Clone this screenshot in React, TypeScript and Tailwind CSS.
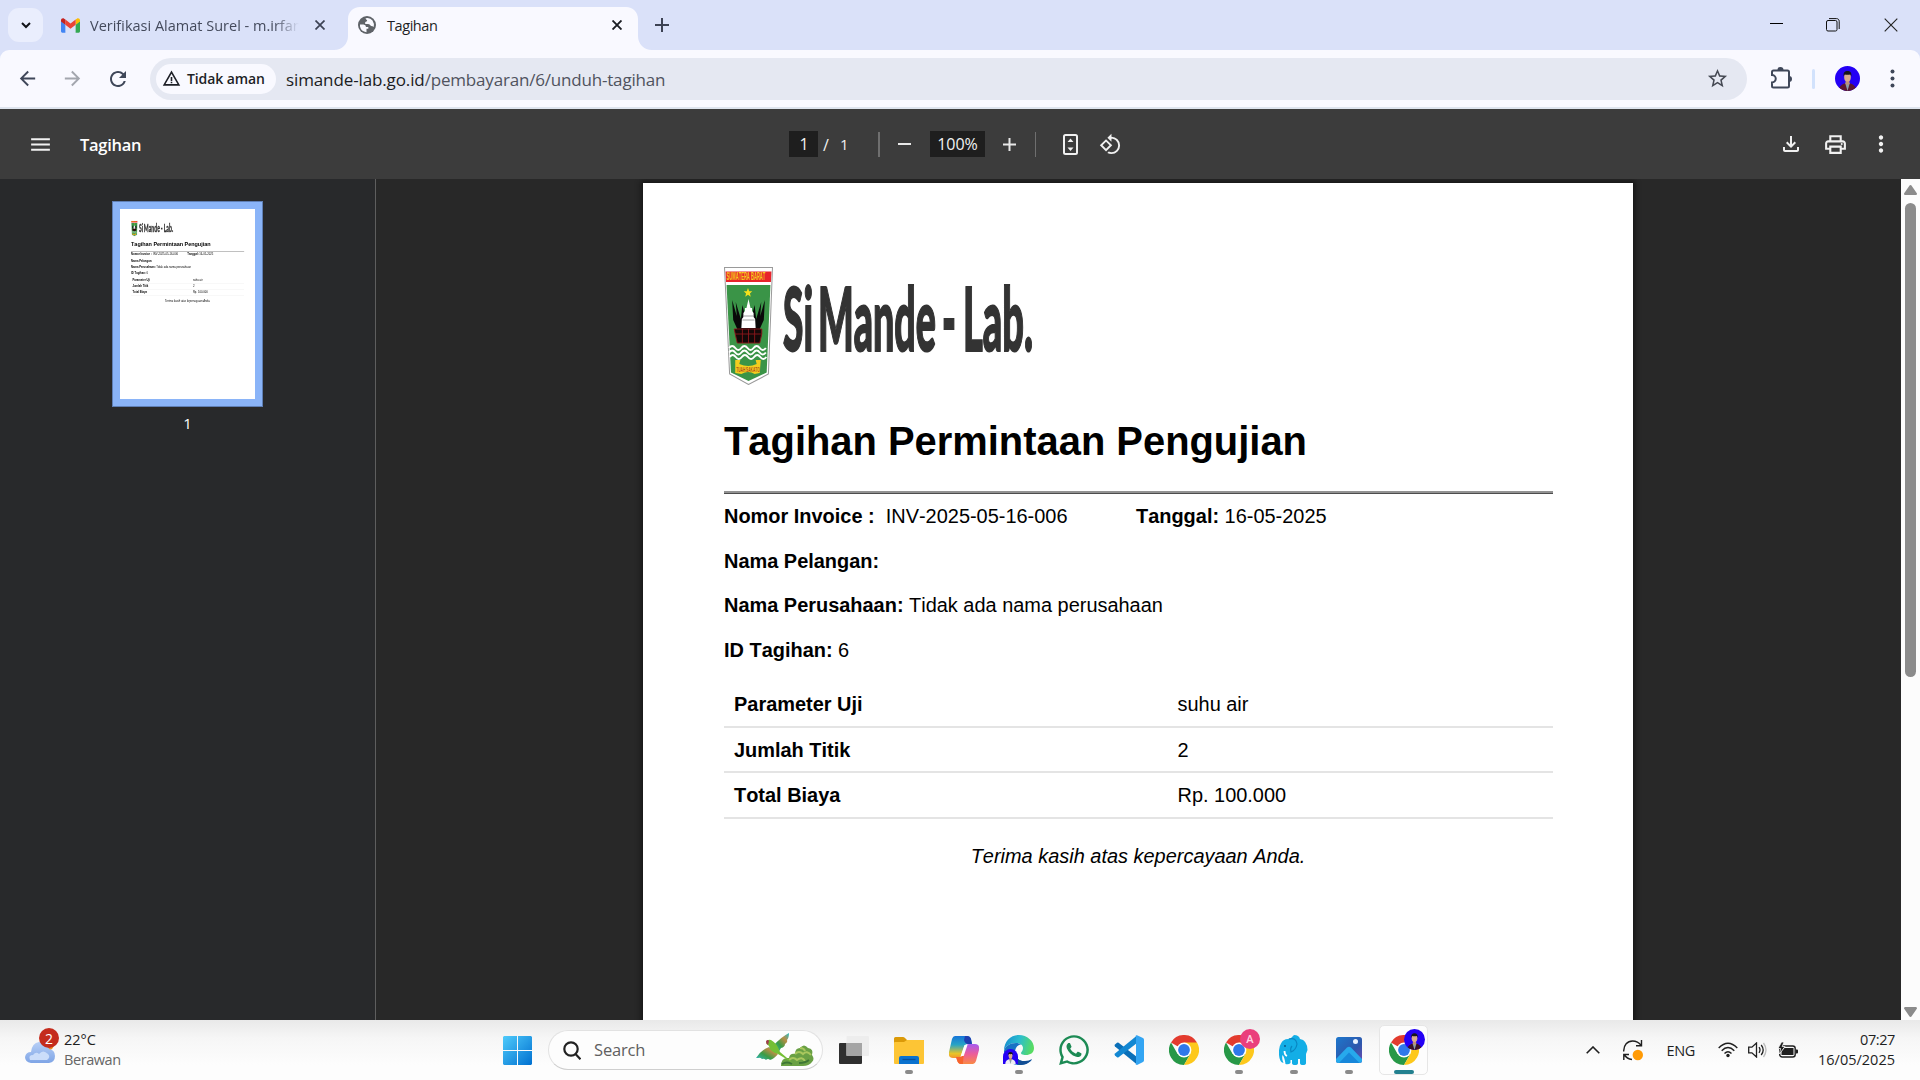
import React, { useLayoutEffect, useRef, useState } from "react";
import {
  MdStarOutline,
  MdMoreVert,
  MdOutlineFileDownload,
  MdOutlinePrint,
  MdRotate90DegreesCcw,
  MdArrowBack,
  MdArrowForward,
  MdRefresh,
  MdMenu,
  MdWarningAmber,
} from "react-icons/md";
import { FaWhatsapp } from "react-icons/fa";

/** Single-line label whose letter spacing is tuned so that it spans `w` pixels. */
function Label({ w, className = "", children }: { w: number; className?: string; children: string }) {
  const ref = useRef<HTMLSpanElement>(null);
  const [spacing, setSpacing] = useState(0);
  useLayoutEffect(() => {
    const natural = ref.current!.offsetWidth;
    setSpacing((w - natural) / children.length);
  }, [w, children]);
  return (
    <span ref={ref} className={`inline-block shrink-0 whitespace-pre ${className}`} style={{ letterSpacing: spacing }}>
      {children}
    </span>
  );
}

function GmailIcon() {
  return (
    <svg width="19" height="15" viewBox="0 0 24 18">
      <path d="M0 3v13.4C0 17.3.7 18 1.600 18H5.500V8L0 3z" fill="#4285f4" />
      <path d="M18.500 18h3.900c.9 0 1.600-.7 1.600-1.600V3l-5.500 5z" fill="#34a853" />
      <path d="M18.500 1.500V8L24 4V2.500c0-2.100-2.400-3.300-4-2z" fill="#fbbc04" />
      <path d="M5.500 8V1.500L12 6.500l6.500-5V8L12 13z" fill="#ea4335" />
      <path d="M0 2.500V4l5.500 4V1.500L4 .5C2.400-.8 0 .4 0 2.500z" fill="#c5221f" />
    </svg>
  );
}

function Globe() {
  return (
    <svg className="relative -mt-[7px]" width="18" height="18" viewBox="0 0 18 18">
      <circle cx="9" cy="9" r="9" fill="#5f6368" />
      <path d="M2 8.500h3.500q2.500.3 2.500 2.500h2.300v1.800H8.500v3.400Q3 15.500 2 10.500z" fill="#f9f9ff" />
      <path d="M7.500 2.200Q12 1 14.500 4.500q2 3 1.200 6.500-1-1-2.700-1-1.500-2.500-3.500-2H7.200V6q1.800-.2 2-1.800Q8 3.800 7.500 2.200z" fill="#f9f9ff" />
    </svg>
  );
}

function Cross({ size, stroke, width }: { size: number; stroke: string; width: number }) {
  return (
    <svg width={size} height={size} viewBox="0 0 10 10" fill="none" stroke={stroke} strokeWidth={width}>
      <path d="M.5.5l9 9M9.500.5l-9 9" />
    </svg>
  );
}

function Portrait({ size, suit = "#5c1830", square = false }: { size: number; suit?: string; square?: boolean }) {
  return (
    <svg width={size} height={size} viewBox="0 0 26 26" className={square ? "rounded-t-full" : "rounded-full"}>
      <rect width="26" height="26" fill="#2400f5" />
      <path d="M4 26c0-5 3-7.500 9-8.500 6 1 9 3.500 9 8.500z" fill={suit} />
      <path d="M10.500 17.500L13 26l2.500-8.500z" fill="#8aa0a8" />
      <path d="M11 14h4v4.500l-2 1.500-2-1.500z" fill="#c09178" />
      <ellipse cx="13" cy="11.500" rx="3.500" ry="4.700" fill="#d9aa8e" />
      <path d="M9 11c-.6-4 1.200-5.800 4-5.800s4.600 1.800 4 5.800l-1-2.200c-2 .3-4 .3-6 0z" fill="#17151a" />
    </svg>
  );
}

function TitleBar() {
  return (
    <div className="flex h-[50px] bg-[#dae1f9] text-[15px]">
      <div className="ml-2 mt-2 flex h-[34px] w-[35px] items-center justify-center rounded-[11px] bg-[#eaeefd]">
        <svg width="10" height="7" viewBox="0 0 10 7" fill="none" stroke="#111318" strokeWidth="2">
          <path d="M1 1l4 4 4-4" />
        </svg>
      </div>
      <div className="ml-[18px] flex h-[50px] w-[273px] items-center">
        <GmailIcon />
        <div className="ml-[10px] w-[209px] overflow-hidden text-[#444a5c] [mask-image:linear-gradient(90deg,#000_88%,transparent)]">
          <Label w={212} className="text-[14.5px]">Verifikasi Alamat Surel - m.irfan</Label>
        </div>
        <div className="ml-4">
          <Cross size={10} stroke="#3c4254" width={1.7} />
        </div>
      </div>
      <div className="relative mt-[7px] flex h-[43px] w-[304px] items-center pl-[24px]">
        <svg className="absolute left-0 top-0" width="320" height="43" viewBox="0 0 320 43">
          <path d="M0 43c8 0 14-6 14-14V12C14 5 19 0 26 0H292c7 0 12 5 12 12V29c0 8 6 14 14 14z" fill="#f9f9ff" />
        </svg>
        <Globe />
        <div className="relative -mt-[7px] ml-[11px] w-[225px] text-[#1f1f25]">
          <Label w={50} className="text-[14.5px]">Tagihan</Label>
        </div>
        <div className="relative -mt-[7px]">
          <Cross size={10} stroke="#1b1d24" width={1.9} />
        </div>
      </div>
      <svg className="ml-[17px] mt-[18px]" width="14" height="14" viewBox="0 0 14 14" stroke="#3c4254" strokeWidth="2">
        <path d="M7 0v14M0 7h14" />
      </svg>
      <div className="ml-auto flex items-start pr-[22px] pt-[18px]">
        <svg className="mt-[5px]" width="13" height="1">
          <rect width="13" height="1" fill="#000" />
        </svg>
        <svg className="ml-[43px]" width="14" height="14" viewBox="0 0 14 14" fill="none" stroke="#111" strokeWidth="1">
          <rect x=".5" y="2.500" width="10.500" height="10.500" rx="1.500" />
          <path d="M3 .6h7.500c1.500 0 2.700 1 2.700 2.700V11" />
        </svg>
        <div className="ml-[44px]">
          <Cross size={14} stroke="#222" width={0.8} />
        </div>
      </div>
    </div>
  );
}

function AddressBar() {
  return (
    <div className="bg-[#dae1f9]">
      <div className="flex h-[59px] items-center rounded-t-[9px] border-b-2 border-[#dee4ee] bg-[#f9f9ff] pl-4 text-[#3f4759]">
        <MdArrowBack className="text-[23px]" />
        <MdArrowForward className="ml-[22px] text-[23px] text-[#a3a6ae]" />
        <MdRefresh className="ml-[22px] text-[24px]" />
        <div className="ml-[20px] flex h-[42px] w-[1597px] items-center rounded-full bg-[#e5e8f2] pl-[6px]">
          <div className="flex h-[30px] w-[120px] items-center rounded-full bg-[#f9f9ff] pl-[6px] text-[#1d1f26]">
            <MdWarningAmber className="text-[19px]" />
            <Label w={78} className="ml-[6px] text-[14px] font-semibold">Tidak aman</Label>
          </div>
          <div className="ml-[10px] flex pt-[3px] text-[17px] leading-6">
            <Label w={139} className="text-[#1b1c22]">simande-lab.go.id</Label>
            <Label w={241} className="text-[#50535e]">/pembayaran/6/unduh-tagihan</Label>
          </div>
          <MdStarOutline className="ml-auto mr-[18px] text-[23px] text-[#454953]" />
        </div>
        <svg className="ml-[23px]" width="23" height="23" viewBox="0 0 23 23">
          <path
            d="M3.500 3.500h14q1.500 0 1.500 1.500v14q0 1.500-1.500 1.500h-14Q2 20.500 2 19v-3.500a3.700 3.700 0 0 0 0-7.500V5q0-1.500 1.500-1.500z"
            fill="none"
            stroke="#3f4759"
            strokeWidth="2"
          />
          <path d="M7.500 3a3 3 0 0 1 6 0zM19 9a3 3 0 0 1 0 6z" fill="#3f4759" />
        </svg>
        <div className="ml-[19px] h-5 w-[3px] rounded bg-[#d2e2fc]" />
        <div className="ml-5">
          <Portrait size={25} />
        </div>
        <svg className="ml-[30px]" width="5" height="19" viewBox="0 0 5 19" fill="#3f4759">
          <circle cx="2.500" cy="2.500" r="2" />
          <circle cx="2.500" cy="9.500" r="2" />
          <circle cx="2.500" cy="16.500" r="2" />
        </svg>
      </div>
    </div>
  );
}

function PdfToolbar() {
  return (
    <div className="flex h-[70px] items-center bg-[#3c3c3c] text-[#f1f1f1]">
      <MdMenu className="ml-[28px] text-[25px]" />
      <div className="ml-[27px] w-[709px] pt-[2px]">
        <Label w={61} className="text-[16.5px] font-semibold text-white">Tagihan</Label>
      </div>
      <div className="flex h-[26px] w-[29px] items-center justify-center bg-[#1e1e1e] pl-px text-[16px]">1</div>
      <div className="flex w-[60px] items-center pl-[5px] pt-px text-[16px]">
        <span>/</span>
        <span className="ml-[11px] text-[15px]">1</span>
      </div>
      <div className="h-[25px] w-[2px] bg-[#6f6f6f]" />
      <div className="ml-[18px] h-[2px] w-[13px] bg-[#e8e8e8]" />
      <div className="ml-[19px] flex h-[26px] w-[55px] items-center justify-center bg-[#1e1e1e] text-[16px]">
        <Label w={41}>100%</Label>
      </div>
      <svg className="ml-[18px]" width="13" height="13" viewBox="0 0 13 13" stroke="#e8e8e8" strokeWidth="2">
        <path d="M6.500 0v13M0 6.500h13" />
      </svg>
      <div className="ml-[19px] h-[25px] w-px bg-[#6f6f6f]" />
      <svg className="ml-[27px]" width="15" height="21" viewBox="0 0 15 21">
        <rect x="1" y="1" width="13" height="19" rx="1.500" fill="none" stroke="#f1f1f1" strokeWidth="2" />
        <path d="M7.500 4.500L10.500 8h-6zM7.500 17l3-3.500h-6z" fill="#f1f1f1" />
      </svg>
      <MdRotate90DegreesCcw className="ml-[21px] text-[23px]" />
      <MdOutlineFileDownload className="ml-auto text-[24px]" />
      <MdOutlinePrint className="ml-[20px] text-[25px]" />
      <MdMoreVert className="ml-[20px] mr-[26px] text-[26px]" />
    </div>
  );
}

function Crest() {
  return (
    <svg width="49" height="118" viewBox="0 0 48 118" preserveAspectRatio="none">
      <path d="M.5.5h47L43.500 107 24 117.500 5.500 107z" fill="#fff" stroke="#9a9a9a" />
      <path d="M1.500 4.500h45l-.5 10.500H2z" fill="#e8242c" />
      <text x="2.500" y="13.300" fontSize="10.500" fontWeight="700" fill="#f5d21c" textLength="38" lengthAdjust="spacingAndGlyphs" fontFamily="Liberation Sans, sans-serif">
        SUMATERA BARAT
      </text>
      <path d="M2.500 18h43L41.800 105.500 24 114 6.800 105.500z" fill="#3a9447" />
      <path d="M23.500 21l1.200 3.300h3l-2.300 2.200.8 3.300-2.700-2-2.700 2 .8-3.300-2.300-2.200h3z" fill="#f6e11c" />
      <path d="M8 33l4.500 16L11.500 35l5 17 1.500-14 3 12h6l3-12 1.500 14 5-17-1 14L40 33l-1 20-4 9v14H13V62l-4-9z" fill="#090909" />
      <path d="M24 32l2 9h1.500v3l1.500 2v4l1.500 2 .5 9H17l.5-9 1.500-2v-4l1.500-2v-3H22z" fill="#fff" />
      <path d="M18 53h12M19 49h10" stroke="#8a8a8a" strokeWidth=".8" />
      <path d="M10 62h27v5l-2 9H13l-2-9zM11 67h25M18 62v14M24 62v14M30 62v14" fill="#130808" stroke="#8b171c" strokeWidth=".9" />
      <path
        d="M5 81q3-4 6 0t6 0 6 0 6 0 6 0 6 0M5 85.500q3-4 6 0t6 0 6 0 6 0 6 0 6 0M5.500 90q3-4 6 0t6 0 6 0 6 0 6 0 6 0"
        fill="none"
        stroke="#fff"
        strokeWidth="2"
      />
      <path d="M11 93h5l-1 4q9 4 17 0l-1-4h5l-1 13-5 1q-6-4-13 0l-6-1z" fill="#f3cd1f" />
      <text x="12" y="105" fontSize="7.500" fontWeight="700" fill="#b3541b" textLength="23" lengthAdjust="spacingAndGlyphs" fontFamily="Liberation Sans, sans-serif">
        TUAH SAKATO
      </text>
    </svg>
  );
}

function Wordmark() {
  const words: [string, number, number][] = [
    ["Si", 3, 30],
    ["Mande", 38, 118],
    ["-", 162, 14],
    ["Lab.", 183, 70],
  ];
  return (
    <svg className="ml-[7px]" width="270" height="118" viewBox="0 0 270 118">
      <g fontSize="87" fontWeight="900" fontFamily="Lato, sans-serif" fill="#333" stroke="#333" strokeWidth="2">
        {words.map(([word, x, width]) => (
          <text key={word} x={x} y="84" textLength={width} lengthAdjust="spacingAndGlyphs">
            {word}
          </text>
        ))}
      </g>
    </svg>
  );
}

function InvoicePage() {
  const rows = [
    ["Parameter Uji", "suhu air"],
    ["Jumlah Titik", "2"],
    ["Total Biaya", "Rp. 100.000"],
  ];
  return (
    <div className="h-[1400px] w-[990px] shrink-0 bg-white px-[81px] pt-[84px] font-['Liberation_Sans',Arial,sans-serif] text-[19.96px] leading-6 text-black [font-kerning:none]">
      <div className="flex h-[118px]">
        <Crest />
        <Wordmark />
      </div>
      <h1 className="mt-[34px] h-[72px] whitespace-nowrap text-[39.9px] font-bold leading-[44px]">Tagihan Permintaan Pengujian</h1>
      <div className="mr-[-1px] h-[3px] border-b border-[#4d4d4d] bg-[#929292]" />
      <div className="mt-[10px] flex h-[44.7px] whitespace-pre">
        <div className="w-[412px]">
          <b>Nomor Invoice : </b> INV-2025-05-16-006
        </div>
        <div>
          <b>Tanggal:</b> 16-05-2025
        </div>
      </div>
      <div className="h-[44.7px]">
        <b>Nama Pelangan:</b>
      </div>
      <div className="h-[44.7px]">
        <b>Nama Perusahaan:</b> Tidak ada nama perusahaan
      </div>
      <div className="h-[44.7px]">
        <b>ID Tagihan:</b> 6
      </div>
      <div className="-mr-px mt-[-1px]">
        {rows.map(([name, value]) => (
          <div key={name} className="flex h-[45.8px] border-b-2 border-[#e4e4e4] pl-[10px] pt-[10px]">
            <b className="w-[443.500px]">{name}</b>
            <span>{value}</span>
          </div>
        ))}
      </div>
      <p className="mt-[25px] text-center italic">Terima kasih atas kepercayaan Anda.</p>
    </div>
  );
}

function Viewer() {
  return (
    <div className="flex h-[841px] bg-[#282828]">
      <div className="flex w-[376px] flex-col items-center border-r border-[#5e5e5e] bg-[#28292b] pt-[22px]">
        <div className="h-[206px] w-[151px] border border-[#5f7fb5] bg-[#8ab4f8] p-[7px]">
          <div className="h-[190px] w-[135px] overflow-hidden bg-white">
            <div className="origin-top-left scale-[0.1364]">
              <InvoicePage />
            </div>
          </div>
        </div>
        <div className="mt-[5px] text-[15px] text-white">1</div>
      </div>
      <div className="flex-1 overflow-hidden pl-[267px] pt-1">
        <div className="w-[990px] shadow-[0_0_5px_2px_#151515]">
          <InvoicePage />
        </div>
      </div>
      <div className="flex w-[19px] flex-col items-center bg-[#fcfcfc] pt-[6px]">
        <svg width="13" height="10" viewBox="0 0 13 10" fill="#8b8b8b">
          <path d="M6.500 0q.8 0 1.300 1L13 8.500q0 1.500-1 1.500H1Q0 10 0 8.500L5.200 1q.5-1 1.300-1z" />
        </svg>
        <div className="mt-[8px] h-[474px] w-[11px] rounded-full bg-[#8b8b8b]" />
        <svg className="mb-[3px] mt-auto" width="13" height="10" viewBox="0 0 13 10" fill="#8b8b8b">
          <path d="M6.500 10q.8 0 1.300-1L13 1.500Q13 0 12 0H1Q0 0 0 1.500L5.200 9q.5 1 1.300 1z" />
        </svg>
      </div>
    </div>
  );
}

function WindowsLogo() {
  return (
    <svg width="29" height="29" viewBox="0 0 29 29">
      <defs>
        <linearGradient id="win" x1="0" y1="0" x2="1" y2="1" gradientUnits="objectBoundingBox">
          <stop offset="0" stopColor="#4fcbfb" />
          <stop offset="1" stopColor="#0070d0" />
        </linearGradient>
      </defs>
      <path d="M1 0h13v14H0V1zM15 0h13l1 1v13H15zM0 15h14v14H1l-1-1zM15 15h14v13l-1 1H15z" fill="url(#win)" />
    </svg>
  );
}

function Parrot() {
  return (
    <svg width="60" height="34" viewBox="0 0 60 34">
      <defs>
        <linearGradient id="wing" x1="0" y1="1" x2="1" y2="0">
          <stop offset="0" stopColor="#2fb8c8" />
          <stop offset=".4" stopColor="#3b9c45" />
          <stop offset=".7" stopColor="#b98d45" />
          <stop offset="1" stopColor="#28bfc4" />
        </linearGradient>
      </defs>
      <path d="M26 33q0-9 8-8 1-5 6-4 0-6 5-6 4-5 8 0 6 1 4 7 3 4 0 7-3 4-9 4z" fill="#69a044" />
      <path d="M40 21q4-4 8 0 4-4 8 1M34 27q4-4 8 0 5-4 8 1M45 15q4 0 5 3" fill="none" stroke="#a9c75e" strokeWidth="2" />
      <path d="M44 30q6 0 10-3M27 31q5-3 10 0" stroke="#3d7635" strokeWidth="2" fill="none" />
      <path d="M1 25q5-8 13-11l9 7q-4 5-8 6-2-2-4 0-2-2-4-1-2-2-4-1z" fill="url(#wing)" />
      <path d="M18 13q8-9 16-13 0 5-2 7 1 2-2 4 0 3-4 4-1 3-4 4z" fill="url(#wing)" />
      <path d="M11 10q1-4 5-3 6 3 9 12l13 11-15-9q-8-2-9-8z" fill="#74bf35" />
      <path d="M11 8q2-2 3 0l-1 4q-2-1-2-4z" fill="#a23a50" />
    </svg>
  );
}

function Folder() {
  return (
    <svg width="30" height="27" viewBox="0 0 30 27">
      <path d="M0 1.500Q0 0 1.500 0H9q1 0 2 1l2 2H29q1 0 1 1v4H0z" fill="#db9a08" />
      <path d="M0 6q0-1 1-1h9l3-2h16q1 0 1 1v22q0 1-1 1H1q-1 0-1-1z" fill="#fdc535" />
      <path d="M5 27v-6q0-2 2-2h16q2 0 2 2v6z" fill="#0b72cf" />
      <path d="M8.500 22.500h13" stroke="#0a4f9a" strokeWidth="1.300" />
    </svg>
  );
}

function Copilot() {
  return (
    <svg width="30" height="28" viewBox="0 0 30 28">
      <defs>
        <linearGradient id="cpa" x1="0" y1="0" x2="0" y2="1">
          <stop offset="0" stopColor="#1674d8" />
          <stop offset=".4" stopColor="#27a4c5" />
          <stop offset=".8" stopColor="#e9c526" />
          <stop offset="1" stopColor="#f4942c" />
        </linearGradient>
        <linearGradient id="cpb" x1="0" y1="0" x2="0" y2="1">
          <stop offset="0" stopColor="#a65af0" />
          <stop offset=".5" stopColor="#ec5c9a" />
          <stop offset="1" stopColor="#fa8a45" />
        </linearGradient>
      </defs>
      <path d="M6 0h12q3 0 4 3l1 5h-5q-2 0-3 3l-3 9q-1 2-3 2H4q-5 0-4-6L3 3q1-3 3-3z" fill="url(#cpa)" />
      <path d="M16 0h2q3 0 4 3l1 5h-4q-3 0-4-4z" fill="#1f3fb0" />
      <path d="M24 8h2q5 0 4 6l-3 11q-1 3-3 3H12q-3 0-4-4l-1-3h4q2 0 3-2l3-9q1-2 3-2z" fill="url(#cpb)" />
      <path d="M14 28h-2q-3 0-4-4l-1-3h4q2 0 3-2l1-2-1 9z" fill="#f7642d" />
      <path d="M15.500 9h3l-3.800 11h-3z" fill="#fdfdfd" />
    </svg>
  );
}

function Edge() {
  return (
    <svg width="30" height="30" viewBox="0 0 30 30">
      <defs>
        <linearGradient id="edg" x1="0" y1=".2" x2="1" y2=".4">
          <stop offset="0" stopColor="#158ccf" />
          <stop offset=".5" stopColor="#2bbdcf" />
          <stop offset="1" stopColor="#58dc61" />
        </linearGradient>
      </defs>
      <path d="M0 16C0 6 7 0 15 0s15 6 15 13c0 5-4 7-8 7s-5-1-5-2 2-2 2-5-3-5-7-5C6 8 1 11 0 16z" fill="url(#edg)" />
      <path d="M0 16C1 11 6 8 12 8c2 0 4 .5 5 1.500-3 0-6 3-6 8 0 6 5 9 10 9 3 0 5-1 7-2-3 4-8 5.500-13 5.500C6 30 0 24 0 16z" fill="#1873c4" />
      <path d="M11 17c0 7 5 9 10 9 3 0 5-1 7-2-3 5-8 6-13 6-6-2-7-9-4-13z" fill="#124e94" />
    </svg>
  );
}

function VsCode() {
  return (
    <svg width="30" height="30" viewBox="0 0 30 30">
      <path d="M1 9.500l2-1.800q.8-.6 1.600 0L23 22v7.500L1 11.500q-1-1 0-2z" fill="#0a6fb8" />
      <path d="M1 20.500l2 1.800q.8.600 1.600 0L23 8V.5L1 18.500q-1 1 0 2z" fill="#1287d2" />
      <path d="M22 29.500q-.8 0 0-1.500V2q-.8-1.500 0-1.500l1-.3 6 2.800q1 .5 1 1.700v20.600q0 1.200-1 1.700L23 30z" fill="#33a5f3" />
    </svg>
  );
}

function Chrome() {
  return (
    <svg width="30" height="30" viewBox="0 0 30 30">
      <path d="M15 15L2 7.500A15 15 0 0 1 28 7.500z" fill="#e33b2e" />
      <path d="M2 7.500A15 15 0 0 0 15 30l6.500-11.300H15L8.500 18.700z" fill="#279847" />
      <path d="M28 7.500A15 15 0 0 1 15 30l6.500-11.300L15 7.500z" fill="#fdc81c" />
      <circle cx="15" cy="15" r="7.400" fill="#fff" />
      <circle cx="15" cy="15" r="5.900" fill="#2f78ea" />
    </svg>
  );
}

function Elephant() {
  return (
    <svg width="29" height="30" viewBox="0 0 29 30">
      <path
        d="M9 4q4-1 6-4 5 0 6 4 7 1 7.500 11l-1.500 4v9q0 2-3 2t-3-2v-4h-2v4q0 2-3 2t-3-2v-3h-1.500v3q-2 2-5 1-1-7-3-9-1 4 1 8-4-1-4.500-8Q-.5 12 2 8.500 4 4 9 4z"
        fill="#13aee6"
      />
      <path d="M10 4q7-2 8 5-1 6-6 8-1-4 1-6" fill="none" stroke="#0a87c2" strokeWidth="1.200" />
      <path d="M5.500 16q0 4 2.500 5" stroke="#fff" strokeWidth="1.800" fill="none" />
      <circle cx="6" cy="11" r=".9" fill="#0a4f80" />
    </svg>
  );
}

function Photos() {
  return (
    <svg width="26" height="26" viewBox="0 0 26 26">
      <defs>
        <linearGradient id="pho" x1="0" y1="0" x2="1" y2="1">
          <stop offset="0" stopColor="#1d77cc" />
          <stop offset=".6" stopColor="#2d57ac" />
          <stop offset="1" stopColor="#704ab0" />
        </linearGradient>
      </defs>
      <rect width="26" height="26" rx="2.500" fill="url(#pho)" />
      <path d="M0 22L11 10.500q2-1.700 4 0l11 11.500v1.500q0 2.500-2.500 2.500h-21Q0 26 0 23.500z" fill="#27a9ec" />
      <path d="M3 26l10-10.500L23.500 26z" fill="#1787da" />
      <circle cx="19.500" cy="4.500" r="2.500" fill="#e9f3ff" />
    </svg>
  );
}

function TaskView() {
  return (
    <svg width="30" height="28" viewBox="0 0 30 28">
      <rect y="7" width="23" height="21" rx="1" fill="#2f2f2f" />
      <rect x="7.500" y="0" width="22.500" height="20" rx="1" fill="#ededed" />
      <path d="M7.500 7H23v13H7.500z" fill="#a5a5a5" />
    </svg>
  );
}

function TaskbarApp({ icon, running = false, badge }: { icon: React.ReactNode; running?: boolean; badge?: React.ReactNode }) {
  return (
    <div className="relative flex h-[60px] w-[55px] flex-col items-center">
      <div className="mt-[15px] flex h-[30px] items-center">{icon}</div>
      {badge}
      {running && <div className="mt-[5px] h-1 w-2 rounded-full bg-[#8a8a8a]" />}
    </div>
  );
}

function Taskbar() {
  return (
    <div className="flex h-[60px] items-start bg-[linear-gradient(#e9e9e9,#f6f6f6_30%,#fdfdfd_75%)] text-[#1f1f1f]">
      <div className="flex w-[503px] pl-[25px]">
        <div className="relative mt-[14px] h-[30px] w-[30px]">
          <svg className="mt-[8px]" width="30" height="22" viewBox="0 0 30 22">
            <circle cx="24" cy="3.500" r="4.500" fill="#f08a1c" />
            <defs>
              <linearGradient id="cl" x1="0" y1="0" x2="0" y2="1">
                <stop offset="0" stopColor="#b7cff6" />
                <stop offset="1" stopColor="#7fa5e6" />
              </linearGradient>
            </defs>
            <path d="M6 21q-6-1-6-6 1-5 6-5 1-9 8-10 8 0 10 7 6 1 6 7 0 6-6 7z" fill="url(#cl)" />
            <path d="M5 18q-2-5 3-5 3-4 6-1 4-5 9 0 3 3-1 6z" fill="#cbddfa" />
          </svg>
          <div className="absolute -top-[6px] left-[14px] flex h-5 w-5 items-center justify-center rounded-full bg-[#c42b1c] text-[14px] text-white">
            2
          </div>
        </div>
        <div className="ml-[9px] flex flex-col items-start pt-[10px] text-[14.5px] leading-5">
          <Label w={32}>22°C</Label>
          <Label w={57} className="text-[#666]">Berawan</Label>
        </div>
      </div>
      <div className="mt-4">
        <WindowsLogo />
      </div>
      <div className="ml-4 mt-[10px] flex h-10 w-[275px] items-center rounded-full border border-b-[#cfcfcf] border-[#e2e2e2] bg-[#fdfdfd] pl-[14px]">
        <svg width="18" height="19" viewBox="0 0 18 19" fill="none" stroke="#222" strokeWidth="2.200">
          <circle cx="8" cy="8" r="6.700" />
          <path d="M12.500 13l5 5.300" />
        </svg>
        <Label w={51} className="ml-[13px] pt-px text-[16.500px] text-[#606060]">Search</Label>
        <div className="ml-auto mr-[7px]">
          <Parrot />
        </div>
      </div>
      <div className="ml-[3px] flex">
        <TaskbarApp icon={<TaskView />} />
        <TaskbarApp icon={<Folder />} running />
        <TaskbarApp icon={<Copilot />} />
        <TaskbarApp
          icon={<Edge />}
          running
          badge={
            <div className="absolute left-[12px] top-[29px]">
              <Portrait size={15} suit="#eeeef4" square />
            </div>
          }
        />
        <TaskbarApp icon={<FaWhatsapp className="text-[34px] text-[#1c8a54]" />} />
        <TaskbarApp icon={<VsCode />} />
        <TaskbarApp icon={<Chrome />} />
        <TaskbarApp
          icon={<Chrome />}
          running
          badge={
            <div className="absolute left-[29px] top-[9px] flex h-5 w-5 items-center justify-center rounded-full bg-[#ea3f7c] text-[11px] font-semibold text-[#ffd3e2]">
              A
            </div>
          }
        />
        <TaskbarApp icon={<Elephant />} running />
        <TaskbarApp icon={<Photos />} running />
        <div className="relative ml-[3px] mt-[5px] flex h-[50px] w-[49px] flex-col items-center rounded-[5px] border border-[#e6e6e6] bg-[#fdfdfd] pt-[9px]">
          <Chrome />
          <div className="absolute left-[24px] top-[3px]">
            <Portrait size={21} suit="#3a1228" />
          </div>
          <div className="mt-[5px] h-1 w-5 rounded-full bg-[#23808f]" />
        </div>
      </div>
      <div className="ml-auto flex h-[60px] items-center pr-[25px]">
        <svg width="14" height="8" viewBox="0 0 14 8" fill="none" stroke="#1f1f1f" strokeWidth="1.600">
          <path d="M.7 7.300L7 1l6.300 6.300" />
        </svg>
        <svg className="ml-[23px]" width="20" height="21" viewBox="0 0 20 21" fill="none" stroke="#1f1f1f" strokeWidth="1.400">
          <path d="M.7 11.500C.5 5 4.500 1 9.500 1c4 0 6.500 1.500 8.700 4.500M18.500 0v5.800H13M.8 20v-5.500H6M1 14.500c2 3 4 4.500 8 5" />
          <circle cx="14.800" cy="15" r="5.200" fill="#ff9a05" stroke="none" />
        </svg>
        <Label w={29} className="ml-[23px] pt-px text-[14.5px]">ENG</Label>
        <svg className="ml-[23px]" width="20" height="16" viewBox="0 0 20 16" fill="none" stroke="#1f1f1f" strokeWidth="1.400">
          <path d="M.7 6q9.300-9.500 18.600 0M3.700 8.700q6.300-6.400 12.600 0M6.500 11.400q3.500-3.500 7 0" />
          <circle cx="10" cy="13.500" r="1.700" fill="#1f1f1f" stroke="none" />
        </svg>
        <svg className="ml-[10px]" width="20" height="16" viewBox="0 0 20 16" fill="none" stroke="#1f1f1f" strokeWidth="1.300">
          <path d="M.7 5.200h3.200L8.500 1v14l-4.600-4.200H.7zM11 5.200q2 2.800 0 5.600M13.200 3q4 5 0 10" />
          <path d="M15.500 1q5 7 0 14" stroke="#bdbdbd" />
        </svg>
        <svg className="ml-[10px]" width="20" height="16" viewBox="0 0 20 16">
          <rect x="1.700" y="4" width="15.500" height="11" rx="2.500" fill="none" stroke="#1f1f1f" strokeWidth="1.400" />
          <path d="M6.500 6h9v7h-12V9zM18 7.500h1q1 0 1 1v2q0 1-1 1h-1z" fill="#1f1f1f" />
          <path d="M3.500 0L0 6.500h2.500L1.500 12 7 4.500H4.200L6 0z" fill="#1f1f1f" stroke="#f8f8f8" strokeWidth=".8" />
        </svg>
        <div className="ml-[20px] flex w-[77px] flex-col items-end text-[14.5px] leading-5">
          <Label w={35}>07:27</Label>
          <Label w={77}>16/05/2025</Label>
        </div>
      </div>
    </div>
  );
}

export default function App() {
  return (
    <div className="h-[1080px] w-[1920px] overflow-hidden font-['Open_Sans','Noto_Sans',sans-serif]">
      <TitleBar />
      <AddressBar />
      <PdfToolbar />
      <Viewer />
      <Taskbar />
    </div>
  );
}
